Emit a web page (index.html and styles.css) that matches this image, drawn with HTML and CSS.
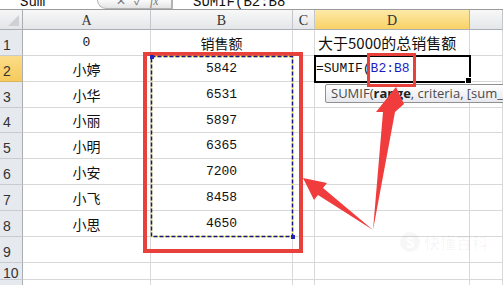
FILE: index.html
```html
<!DOCTYPE html>
<html lang="zh-CN">
<head>
  <meta charset="UTF-8">
  <title>SUMIF</title>
  <link rel="stylesheet" href="styles.css">
</head>
<body>
  <div class="app">
    <div class="formula-bar">
      <div class="name-box"><span>Sum</span></div>
      <div class="fx-tools"><span>✕</span><span>✓</span><span class="fx">fx</span></div>
      <div class="formula-input"><span>SUMIF(B2:B8</span></div>
    </div>

    <div class="sheet">
      <div class="corner"></div>
      <div class="col-head">A</div>
      <div class="col-head">B</div>
      <div class="col-head">C</div>
      <div class="col-head active">D</div>
      <div class="col-head"></div>

      <div class="row-head">1</div>
      <div class="cell num">0</div>
      <div class="cell">销售额</div>
      <div class="cell"></div>
      <div class="cell title">大于5000的总销售额</div>
      <div class="cell"></div>

      <div class="row-head active">2</div>
      <div class="cell">小婷</div>
      <div class="cell num">5842</div>
      <div class="cell"></div>
      <div class="cell editing">=SUMIF(<span class="ref">B2:B8</span></div>
      <div class="cell"></div>

      <div class="row-head">3</div>
      <div class="cell">小华</div>
      <div class="cell num">6531</div>
      <div class="cell"></div>
      <div class="cell"></div>
      <div class="cell"></div>

      <div class="row-head">4</div>
      <div class="cell">小丽</div>
      <div class="cell num">5897</div>
      <div class="cell"></div>
      <div class="cell"></div>
      <div class="cell"></div>

      <div class="row-head">5</div>
      <div class="cell">小明</div>
      <div class="cell num">6365</div>
      <div class="cell"></div>
      <div class="cell"></div>
      <div class="cell"></div>

      <div class="row-head">6</div>
      <div class="cell">小安</div>
      <div class="cell num">7200</div>
      <div class="cell"></div>
      <div class="cell"></div>
      <div class="cell"></div>

      <div class="row-head">7</div>
      <div class="cell">小飞</div>
      <div class="cell num">8458</div>
      <div class="cell"></div>
      <div class="cell"></div>
      <div class="cell"></div>

      <div class="row-head">8</div>
      <div class="cell">小思</div>
      <div class="cell num">4650</div>
      <div class="cell"></div>
      <div class="cell"></div>
      <div class="cell"></div>

      <div class="row-head">9</div>
      <div class="cell"></div>
      <div class="cell"></div>
      <div class="cell"></div>
      <div class="cell"></div>
      <div class="cell"></div>

      <div class="row-head">10</div>
      <div class="cell"></div>
      <div class="cell"></div>
      <div class="cell"></div>
      <div class="cell"></div>
      <div class="cell"></div>

      <div class="row-head"></div>
      <div class="cell"></div>
      <div class="cell"></div>
      <div class="cell"></div>
      <div class="cell"></div>
      <div class="cell"></div>
    </div>

    <div class="tooltip">SUMIF(<b>range</b>, criteria, [sum_range])</div>

    <div class="watermark"><span class="wm-logo">S</span>快懂百科</div>

    <!-- annotation marks drawn over the sheet -->
    <svg class="marks" width="503" height="285" viewBox="0 0 503 285">
      <rect x="145" y="54" width="156" height="197" fill="none" stroke="#e8403b" stroke-width="4"/>
      <rect x="151.5" y="56.5" width="141" height="180" fill="none" stroke="#f4f060" stroke-width="1.5"/>
      <rect x="151.5" y="56.5" width="141" height="180" fill="none" stroke="#16168c" stroke-width="1.5" stroke-dasharray="4 2"/>
      <rect x="150" y="55" width="4" height="4" fill="#2323b8"/>
      <rect x="291" y="235" width="4" height="4" fill="#2323b8"/>
      <rect x="368.5" y="54.5" width="46" height="31" fill="none" stroke="#e8403b" stroke-width="3"/>
      <polygon points="396,87 404,104 395,112 373,230 383,112 376,112" fill="#f03c3c"/>
      <polygon points="303,178 327,183 323,188 373,230 318,195 314,200" fill="#f03c3c"/>
    </svg>
  </div>
</body>
</html>
```

FILE: styles.css
```css
body {
  margin: 0;
  background: #fff;
  font-family: "Noto Sans CJK SC", sans-serif;
  color: #111;
}
.app {
  position: relative;
  width: 503px;
  height: 285px;
  overflow: hidden;
}

/* formula bar, only its lower edge is in view */
.formula-bar {
  display: flex;
  height: 9px;
  border-bottom: 1px solid #9b9b9b;
  overflow: hidden;
  font-family: "Liberation Mono", monospace;
  font-size: 14px;
}
.name-box {
  width: 97px;
  display: flex;
  align-items: flex-end;
  padding-left: 20px;
  box-sizing: border-box;
}
.name-box span,
.formula-input span {
  line-height: 14px;
  margin-bottom: 0;
}
.fx-tools {
  width: 75px;
  display: flex;
  align-items: flex-end;
  gap: 8px;
  padding-left: 18px;
  box-sizing: border-box;
  background: linear-gradient(#fafafa, #e4e4e4);
  border: 1px solid #b3b3b3;
  border-top: none;
  border-radius: 0 0 0 9px;
  color: #7a7a7a;
  font-family: "Liberation Sans", sans-serif;
  font-size: 12px;
}
.fx-tools span {
  line-height: 12px;
  margin-bottom: 1px;
}
.fx-tools .fx {
  font-style: italic;
  font-family: "Liberation Serif", serif;
}
.formula-input {
  flex: 1;
  display: flex;
  align-items: flex-end;
  padding-left: 20px;
  border-left: 1px solid #b3b3b3;
}

/* sheet grid */
.sheet {
  display: grid;
  grid-template-columns: 23px 128px 142px 22px 155px 1fr;
  grid-template-rows: 20px 26px 26px 26px 25px 26px 26px 26px 26px 26px 17px 26px;
}
.sheet > div {
  box-sizing: border-box;
}
.corner {
  display: flex;
  justify-content: flex-end;
  align-items: flex-end;
  padding: 0 3px 3px 0;
  background: linear-gradient(#f6f6f6, #e3e5e8);
  border-right: 1px solid #a9aeb5;
  border-bottom: 1px solid #a9aeb5;
}
.corner::after {
  content: '';
  border-left: 11px solid transparent;
  border-bottom: 11px solid #cdd0d4;
}
.col-head {
  display: flex;
  align-items: center;
  justify-content: center;
  background: linear-gradient(#f8f8f8, #e4e6e9);
  border-right: 1px solid #c3c7cc;
  border-bottom: 1px solid #a9aeb5;
  font-family: "Liberation Serif", serif;
  font-size: 14px;
  color: #333;
  padding-top: 2px;
}
.col-head.active {
  background: linear-gradient(#fde9a8, #f8d266);
  border-right-color: #d9b45a;
}
.row-head {
  display: flex;
  align-items: center;
  padding: 4px 0 0 3px;
  background: #e6e9ed;
  border-right: 1px solid #a9aeb5;
  border-bottom: 1px solid #c8ccd1;
  font-family: "Liberation Sans", sans-serif;
  font-size: 14px;
  color: #333;
}
.row-head.active {
  background: linear-gradient(#fbdc88, #f7ca5c);
  border-bottom-color: #d9b45a;
}
.cell {
  display: flex;
  align-items: center;
  justify-content: center;
  border-right: 1px solid #d8d8d8;
  border-bottom: 1px solid #d8d8d8;
  font-size: 14px;
  white-space: nowrap;
}
.cell.num {
  font-family: "Liberation Mono", monospace;
  font-size: 13px;
}
.cell.title {
  justify-content: flex-start;
  padding-left: 3px;
  font-size: 15px;
}
.cell.editing {
  position: relative;
  justify-content: flex-start;
  padding-left: 1px;
  font-family: "Liberation Mono", monospace;
  font-size: 13px;
  outline: 2px solid #000;
  outline-offset: -1px;
}
.cell.editing::after {
  content: '';
  position: absolute;
  right: -3px;
  bottom: -3px;
  width: 5px;
  height: 5px;
  background: #000;
  border: 1px solid #fff;
}
.ref {
  color: #1d1dc4;
}

/* function hint */
.tooltip {
  position: absolute;
  left: 325px;
  top: 84px;
  height: 17px;
  padding: 0 6px 0 5px;
  border: 1px solid #8f8f8f;
  border-radius: 2px;
  background: linear-gradient(#ffffff, #e7e8ee);
  font-family: "Open Sans", sans-serif;
  font-size: 13px;
  line-height: 17px;
  color: #4a4a4a;
  white-space: nowrap;
}
.tooltip b {
  color: #222;
}

.watermark {
  position: absolute;
  left: 400px;
  top: 230px;
  display: flex;
  align-items: center;
  gap: 4px;
  font-size: 16px;
  font-weight: bold;
  color: rgba(0, 0, 0, 0.03);
}
.wm-logo {
  width: 20px;
  height: 20px;
  border-radius: 50%;
  background: rgba(0, 0, 0, 0.03);
  color: #fff;
  font-size: 14px;
  text-align: center;
  line-height: 20px;
}

.marks {
  position: absolute;
  left: 0;
  top: 0;
}
```
